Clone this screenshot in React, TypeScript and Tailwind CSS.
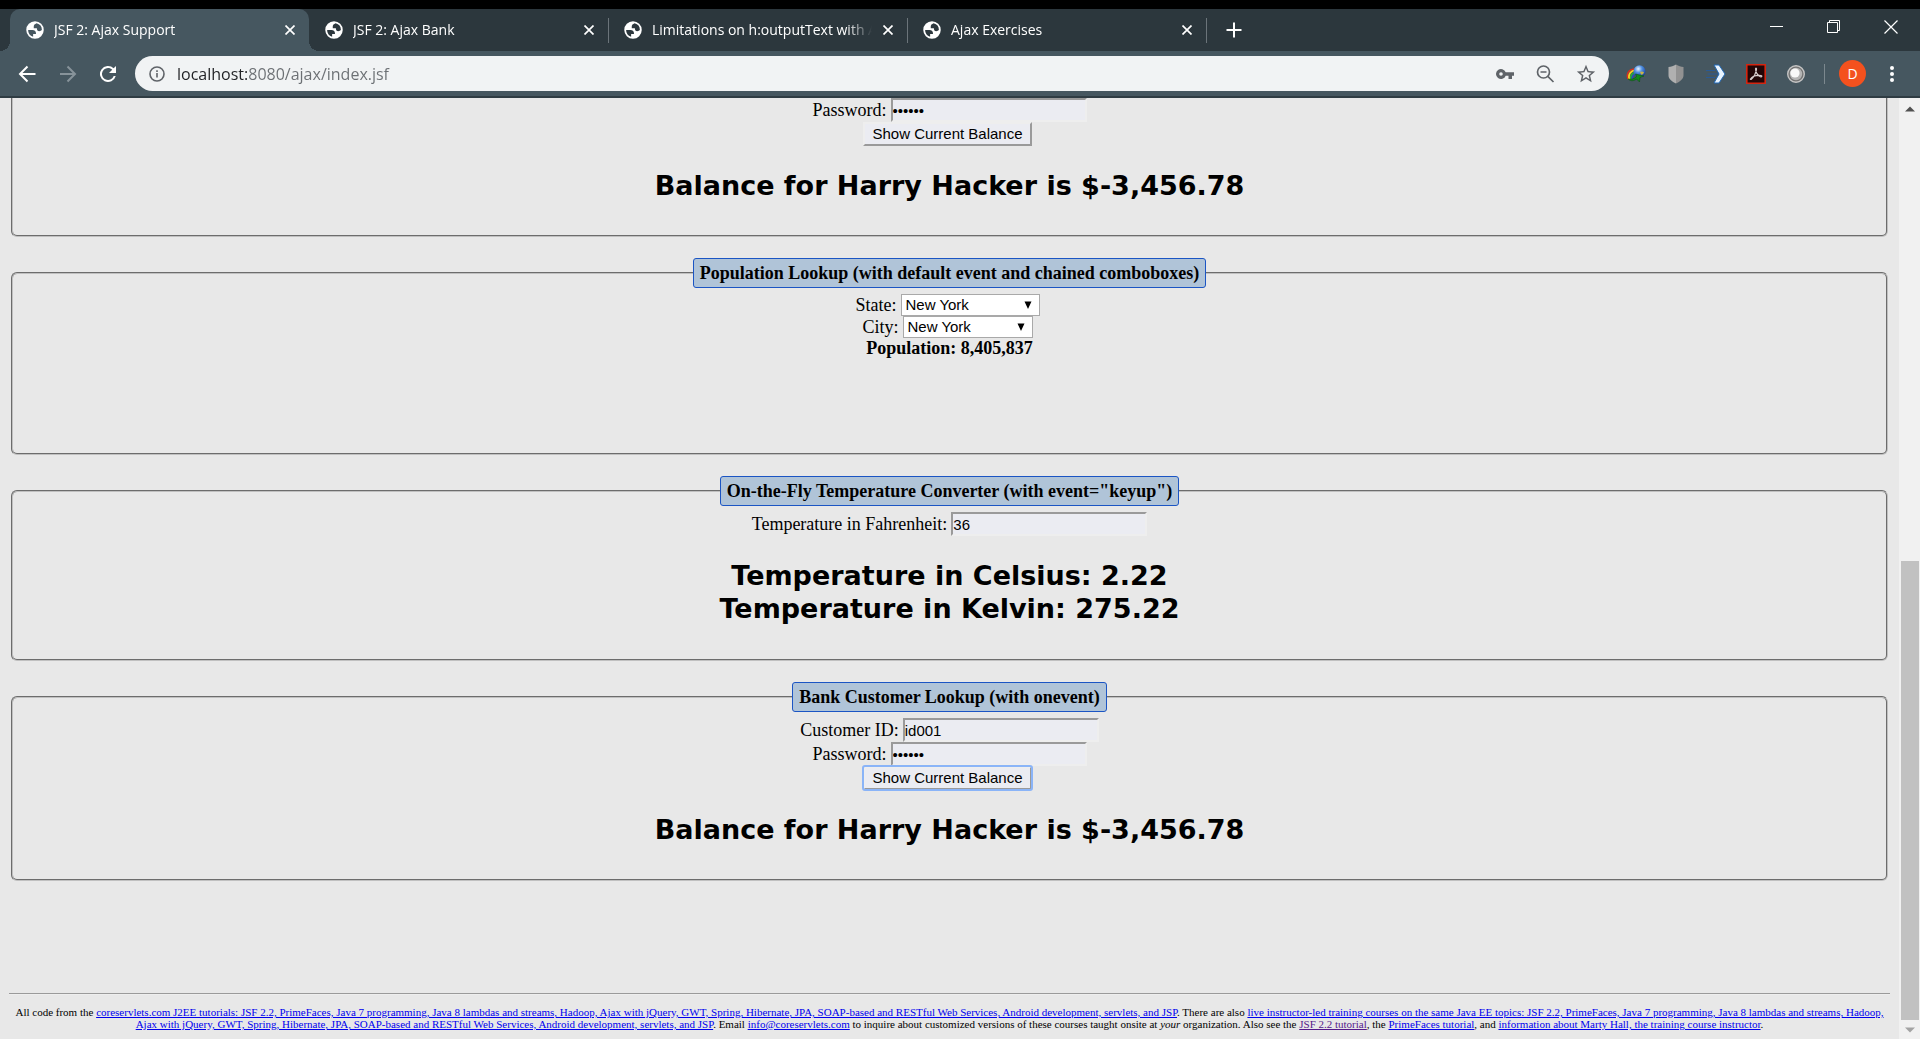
import React from "react";

function Favicon() {
  return (
    <svg viewBox="0 0 16 16" className="size-5 shrink-0" fill="#fff" aria-hidden="true">
      <path
        fillRule="evenodd"
        d="M8 1a7 7 0 1 1 0 14A7 7 0 0 1 8 1ZM2.500 8a5.500 5.500 0 0 0 4 5.300V11.200h2.300C8.900 9.100 7.900 8 5.900 8ZM9.300 2.650C7.800 3.300 7 4 7 5.200V6.600h2.500c0 1.500.6 2.300 1.900 2.300.9 0 1.600-.3 2.100-.9A5.500 5.500 0 0 0 9.300 2.650Z"
      />
    </svg>
  );
}

function Tab({ title, active = false }: { title: string; active?: boolean }) {
  return (
    <div className={active ? "relative flex h-full w-[299px] items-center rounded-t-[10px] bg-[#465760]" : "relative flex h-full w-[299px] items-center"}>
      {active && (
        <>
          <span className="absolute bottom-0 -left-[10px] size-[10px] bg-[radial-gradient(circle_at_0_0,#2c373d_10px,#465760_10px)]" />
          <span className="absolute bottom-0 -right-[10px] size-[10px] bg-[radial-gradient(circle_at_100%_0,#2c373d_10px,#465760_10px)]" />
        </>
      )}
      <button type="button" className="flex min-w-0 flex-1 items-center gap-[9px] pl-[15px] text-left">
        <Favicon />
        <span className="block w-[222px] overflow-hidden pb-px text-[14px] whitespace-nowrap text-white [mask-image:linear-gradient(to_right,#000_194px,transparent_220px)]">
          {title}
        </span>
      </button>
      <button type="button" aria-label={`Close ${title}`} className="mr-[9px] flex size-5 items-center justify-center">
        <svg viewBox="0 0 10 10" className="size-[10px]" stroke="#fff" strokeWidth="1.700" aria-hidden="true">
          <path d="M.5.5l9 9M9.500.5l-9 9" />
        </svg>
      </button>
      {!active && <span className="absolute top-[9px] -right-px h-[25px] w-px bg-[#6b747a]" />}
    </div>
  );
}

function TabStrip() {
  return (
    <div className="flex h-[42px] items-center pl-[10px]">
      <Tab title="JSF 2: Ajax Support" active />
      <Tab title="JSF 2: Ajax Bank" />
      <Tab title="Limitations on h:outputText with A" />
      <Tab title="Ajax Exercises" />
      <button type="button" aria-label="New tab" className="ml-5 flex size-4 items-center justify-center">
        <svg viewBox="0 0 16 16" className="size-4" stroke="#fff" strokeWidth="2"><path d="M8 .5v15M.5 8h15" /></svg>
      </button>
      <div className="mb-[6px] ml-auto flex items-center gap-[43px] pr-[22px]">
        <button type="button" aria-label="Minimize">
          <svg viewBox="0 0 14 14" className="size-[14px]" stroke="#fff"><path d="M0 6.500h13" /></svg>
        </button>
        <button type="button" aria-label="Restore">
          <svg viewBox="0 0 14 14" className="size-[14px]" stroke="#fff" fill="none"><path d="M.5 2.500h10v10H.5zM2.500 2.500v-2h10v10h-2" /></svg>
        </button>
        <button type="button" aria-label="Close window">
          <svg viewBox="0 0 14 14" className="size-[14px]" stroke="#fff" strokeWidth="1.200"><path d="M.5.5l13 13M13.500.5l-13 13" /></svg>
        </button>
      </div>
    </div>
  );
}

function Extensions() {
  return (
    <div className="ml-[17px] flex items-center gap-5">
      <button type="button" aria-label="Download manager" className="size-5">
        <svg viewBox="0 0 20 20" className="size-5">
          <defs>
            <radialGradient id="orb" cx="0.4" cy="0.3" r="0.7">
              <stop offset="0" stopColor="#e8f4ff" />
              <stop offset="0.45" stopColor="#4f8fe0" />
              <stop offset="1" stopColor="#1a3f96" />
            </radialGradient>
          </defs>
          <path d="M2 15C-.5 9 4 4.500 10 5" fill="none" stroke="#d8301e" strokeWidth="1.500" />
          <path d="M3.500 15.500C1.500 10 5.500 6 10 6.500" fill="none" stroke="#ffd51a" strokeWidth="1.800" />
          <path d="M5 16C3.500 11 7 8 11 8.200" fill="none" stroke="#23b535" strokeWidth="1.500" />
          <path d="M6.500 15.500C5.500 12 8 9.500 11 9.500" fill="none" stroke="#2550c0" strokeWidth="1.500" />
          <circle cx="13.500" cy="7.300" r="6" fill="url(#orb)" />
          <path d="M14 8c1.500-1 3-.5 4 .5-.5 1.500-2 2.500-3 2z" fill="#c9b24a" />
          <path d="M2 15c3 2.500 6 2 8.500 0l3 3 .5-4.500 4-1.500-8.500-2 1 2.500c-2 2.500-5 3-8.500 2.500z" fill="#128a1c" stroke="#0a4a10" strokeWidth="0.5" />
        </svg>
      </button>
      <button type="button" aria-label="Shield" className="size-5">
        <svg viewBox="0 0 20 20" className="size-5">
          <path d="M10 .5c2.500 1.700 5 2.400 7.500 2.500v8.500c0 3.500-3.500 6-7.500 8z" fill="#929292" />
          <path d="M10 .5C7.500 2.200 5 2.900 2.500 3v8.500c0 3.500 3.500 6 7.500 8z" fill="#b0b0b0" />
        </svg>
      </button>
      <button type="button" aria-label="Translate" className="size-5">
        <svg viewBox="0 0 20 20" className="size-5" fill="none">
          <path d="M0 6.500h9M1.500 10h11M0 13.500h9" stroke="#2a5a94" strokeWidth="1" />
          <path d="M8 1h5l6 9-6 9H8l5-9z" fill="#e8f4ff" stroke="#2168b5" strokeWidth="1" />
        </svg>
      </button>
      <button type="button" aria-label="PDF" className="size-5">
        <svg viewBox="0 0 20 20" className="size-5" fill="none">
          <path d="M.8.8h18.400v18.400H.8z" fill="#220607" stroke="#d42510" strokeWidth="1.600" />
          <path d="M4.500 15c1.500-2.500 4.500-4 10.500-3.500 1.500.3.800 1.700-.6 1.200C11 11.500 9.500 7 9.500 4.800c.2-1.300 1.400-.7 1 .8-.8 4-3 7.600-5 9.600-.8.600-1.500.3-1-.2z" stroke="#d8cccc" strokeWidth="1.100" />
        </svg>
      </button>
      <button type="button" aria-label="Recorder" className="size-5">
        <svg viewBox="0 0 20 20" className="size-5">
          <circle cx="10" cy="10" r="8.300" fill="#737373" stroke="#c4c4c4" strokeWidth="1.400" />
          <circle cx="10" cy="10" r="6.200" fill="#b4b4b4" />
          <circle cx="9" cy="9" r="4.600" fill="#f8f8f8" />
        </svg>
      </button>
    </div>
  );
}

function Toolbar() {
  return (
    <div className="flex h-[47px] items-center border-b-2 border-[#2f3c43] bg-[#465760] pl-[15px]">
      <button type="button" aria-label="Back" className="size-6">
        <svg viewBox="0 0 24 24" className="size-6" fill="none" stroke="#fff" strokeWidth="2"><path d="M20.500 12H5M12.500 4.500L5 12l7.500 7.500" /></svg>
      </button>
      <button type="button" aria-label="Forward" className="ml-[17px] size-6">
        <svg viewBox="0 0 24 24" className="size-6" fill="none" stroke="#87939a" strokeWidth="2"><path d="M4 12h15M11.500 4.500L19 12l-7.500 7.500" /></svg>
      </button>
      <button type="button" aria-label="Reload" className="ml-4 size-6">
        <svg viewBox="0 0 24 24" className="size-6" fill="#fff"><path d="M17.650 6.350A8 8 0 1 0 19.730 14h-2.080A6 6 0 1 1 12 6c1.660 0 3.140.69 4.220 1.780L13 11h7V4z" /></svg>
      </button>
      <div className="ml-[15px] flex h-[35px] flex-1 items-center rounded-full bg-[#f1f3f4] pr-3 pl-[14px]">
        <svg viewBox="0 0 16 16" className="size-4 shrink-0" fill="none" stroke="#5f6368" strokeWidth="1.600" aria-hidden="true">
          <circle cx="8" cy="8" r="7" /><path d="M8 7v4.500M8 4.200v1.700" />
        </svg>
        <input
          aria-label="Address"
          defaultValue="localhost:8080/ajax/index.jsf"
          className="ml-3 min-w-0 flex-1 bg-[linear-gradient(to_right,#202124_70px,#6b6f73_70px)] bg-clip-text text-[16px] text-transparent outline-none"
        />
        <div className="flex items-center gap-5">
          <svg viewBox="0 0 20 20" className="size-5" fill="#5f6368" aria-hidden="true">
            <path fillRule="evenodd" d="M10.700 8.300A5 5 0 1 0 10.700 11.700H13.500V15h3.500v-3.300h2V8.300ZM6 8.200a1.800 1.800 0 1 1 0 3.600 1.800 1.800 0 0 1 0-3.600Z" />
          </svg>
          <svg viewBox="0 0 20 20" className="size-5" fill="none" stroke="#5f6368" strokeWidth="1.700" aria-hidden="true">
            <circle cx="8.500" cy="8" r="6" /><path d="M12.800 12.300l5.700 5.700M5.500 8h6" />
          </svg>
          <svg viewBox="0 0 24 24" className="size-[22px]" fill="#5f6368" aria-hidden="true">
            <path d="M22 9.240l-7.190-.62L12 2 9.190 8.630 2 9.240l5.460 4.730L5.820 21 12 17.270 18.180 21l-1.630-7.030zM12 15.400l-3.760 2.270 1-4.280-3.320-2.880 4.380-.38L12 6.100l1.710 4.040 4.380.38-3.320 2.880 1 4.280z" />
          </svg>
        </div>
      </div>
      <Extensions />
      <span className="ml-[18px] h-5 w-px bg-[#7c888e]" />
      <button type="button" className="ml-[14px] flex size-[27px] items-center justify-center rounded-full bg-[#f4511e] text-[14px] text-white">D</button>
      <button type="button" aria-label="Menu" className="mr-[25px] ml-[23px]">
        <svg viewBox="0 0 6 18" className="h-[18px] w-[6px]" fill="#fff">
          <circle cx="3" cy="3" r="2" /><circle cx="3" cy="9" r="2" /><circle cx="3" cy="15" r="2" />
        </svg>
      </button>
    </div>
  );
}

function Panel({ legend, className, children }: { legend?: string; className: string; children: React.ReactNode }) {
  const box = "mx-[2px] border-2 border-[#c0c0c0] pb-[11px] [border-style:groove]";
  return (
    <fieldset className={`${box} ${className}`}>
      {legend && (
        <legend className="mx-auto mb-[6px] rounded-[3px] border border-[#1b55c4] bg-[#b0c4d8] px-[6px] py-1 leading-[20px] font-bold">
          {legend}
        </legend>
      )}
      {children}
    </fieldset>
  );
}

function Field({ id, label, type = "text", value }: { id: string; label: string; type?: string; value: string }) {
  return (
    <div className="flex h-6 items-center justify-center gap-1">
      <label htmlFor={id}>{label}</label>
      <input
        id={id}
        type={type}
        defaultValue={value}
        className="h-6 w-[196px] border-2 border-t-[#9a9a9a] border-r-[#eeeeee] border-b-[#eeeeee] border-l-[#9a9a9a] bg-[#ebecf2] font-['Liberation_Sans',sans-serif] text-[15px] outline-none"
      />
    </div>
  );
}

function Choice({ id, label, value, width }: { id: string; label: string; value: string; width: string }) {
  return (
    <div className="mr-1 flex h-[22px] items-center justify-center gap-1">
      <label htmlFor={id}>{label}</label>
      <div className="relative">
        <select
          id={id}
          defaultValue={value}
          className={`${width} block h-[22px] appearance-none border border-[#a9a9a9] bg-white pl-1 font-['Liberation_Sans',sans-serif] text-[15px] outline-none`}
        >
          <option>{value}</option>
        </select>
        <svg viewBox="0 0 8 8" className="pointer-events-none absolute top-[7px] right-2 size-2" aria-hidden="true">
          <path d="M.5.5h7L4 8z" />
        </svg>
      </div>
    </div>
  );
}

function BalanceButton({ focused = false }: { focused?: boolean }) {
  const look =
    "h-6 border-2 border-t-[#eeeeee] border-r-[#9a9a9a] border-b-[#9a9a9a] border-l-[#eeeeee] bg-[#ebecf2] px-[7px] font-['Liberation_Sans',sans-serif] text-[15px] leading-[20px]";
  return (
    <div className="mr-1 flex justify-center">
      <button type="button" className={focused ? `${look} rounded-[2px] outline-2 -outline-offset-1 outline-[#8ab4f8]` : look}>
        Show Current Balance
      </button>
    </div>
  );
}

function Result({ children }: { children: React.ReactNode }) {
  return <h2 className="mt-[23px] mb-[22px] text-center font-['DejaVu_Sans',sans-serif] text-[27px] leading-[33px] font-bold">{children}</h2>;
}

function A({ children, visited = false }: { children: React.ReactNode; visited?: boolean }) {
  return <a href="#" className={visited ? "text-[#551a8b] underline" : "text-[#0000ee] underline"}>{children}</a>;
}

function Scrollbar() {
  return (
    <div className="flex w-[21px] shrink-0 flex-col bg-[#f1f1f1]" aria-hidden="true">
      <div className="flex h-[22px] items-center justify-center">
        <svg viewBox="0 0 10 6" className="h-[6px] w-[10px]" fill="#505050"><path d="M0 5.500h10L5 .5z" /></svg>
      </div>
      <div className="flex-[441]" />
      <div className="mr-px ml-[2px] flex-[459] bg-[#c1c1c1]" />
      <div className="flex h-[19px] items-center justify-center">
        <svg viewBox="0 0 10 6" className="h-[6px] w-[10px]" fill="#a3a3a3"><path d="M0 .5h10l-5 5z" /></svg>
      </div>
    </div>
  );
}

export default function App() {
  return (
    <div className="flex h-screen flex-col overflow-hidden bg-[#e8e8e8] font-['Liberation_Serif',serif] text-[18px] text-black">
      <header className="shrink-0 border-t-[9px] border-black bg-[#2c373d] font-['Open_Sans','Noto_Sans',sans-serif]">
        <TabStrip />
        <Toolbar />
      </header>
      <div className="flex min-h-0 flex-1">
        <main className="min-w-0 flex-1 px-[9px] leading-[20px]">
          <Panel className="rounded-b-[6px] border-t-0">
            <Field id="password-1" label="Password:" type="password" value="secret" />
            <BalanceButton />
            <Result>Balance for Harry Hacker is $-3,456.78</Result>
          </Panel>
          <div className="mt-[21px] flex flex-col gap-[21px]">
            <Panel legend="Population Lookup (with default event and chained comboboxes)" className="min-h-[197px] rounded-[6px]">
              <Choice id="state" label="State:" value="New York" width="w-[139px]" />
              <Choice id="city" label="City:" value="New York" width="w-[130px]" />
              <p className="text-center font-bold">Population: 8,405,837</p>
            </Panel>
            <Panel legend={'On-the-Fly Temperature Converter (with event="keyup")'} className="min-h-[185px] rounded-[6px]">
              <Field id="fahrenheit" label="Temperature in Fahrenheit:" value="36" />
              <Result>
                Temperature in Celsius: 2.22
                <br />
                Temperature in Kelvin: 275.22
              </Result>
            </Panel>
            <Panel legend="Bank Customer Lookup (with onevent)" className="min-h-[199px] rounded-[6px]">
              <Field id="customer" label="Customer ID:" value="id001" />
              <Field id="password-2" label="Password:" type="password" value="secret" />
              <BalanceButton focused />
              <Result>Balance for Harry Hacker is $-3,456.78</Result>
            </Panel>
          </div>
          <hr className="mt-[112px] border-t border-b border-t-[#9a9a9a] border-b-[#eeeeee]" />
          <p className="mt-[11px] text-center text-[11px] leading-[12px]">
            All code from the{" "}
            <A>coreservlets.com J2EE tutorials: JSF 2.2, PrimeFaces, Java 7 programming, Java 8 lambdas and streams, Hadoop, Ajax with jQuery, GWT, Spring, Hibernate, JPA, SOAP-based and RESTful Web Services, Android development, servlets, and JSP</A>
            . There are also{" "}
            <A>live instructor-led training courses on the same Java EE topics: JSF 2.2, PrimeFaces, Java 7 programming, Java 8 lambdas and streams, Hadoop, Ajax with jQuery, GWT, Spring, Hibernate, JPA, SOAP-based and RESTful Web Services, Android development, servlets, and JSP</A>
            . Email <A>info@coreservlets.com</A> to inquire about customized versions of these courses taught onsite at <i>your</i> organization. Also see the{" "}
            <A visited>JSF 2.2 tutorial</A>, the <A>PrimeFaces tutorial</A>, and <A>information about Marty Hall, the training course instructor</A>.
          </p>
        </main>
        <Scrollbar />
      </div>
    </div>
  );
}
